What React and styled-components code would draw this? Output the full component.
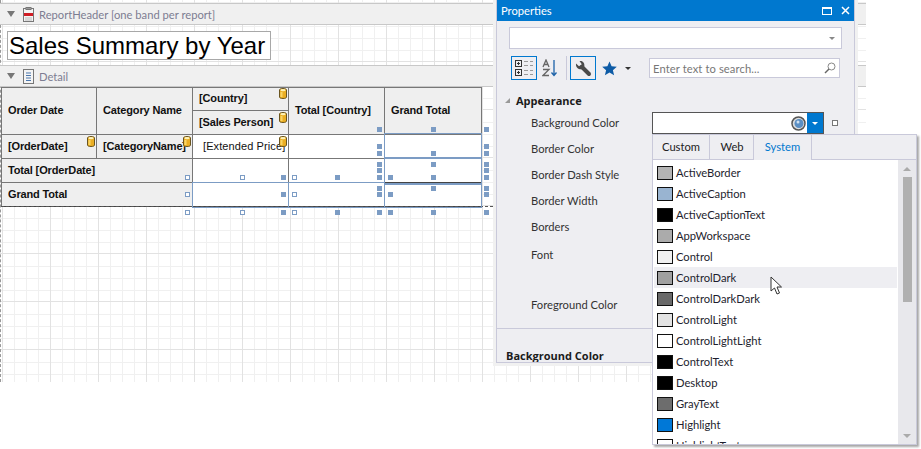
import React from "react";
import styled, { createGlobalStyle } from "styled-components";

const Global = createGlobalStyle`
  html, body { margin: 0; padding: 0; background: #fff; }
  * { box-sizing: border-box; }
`;

const UI = `Lato, "Open Sans", sans-serif`;
const BOLD = `"Open Sans", "Noto Sans", sans-serif`;
const CELL = `"Liberation Sans", Arial, sans-serif`;

const Page = styled.div`
  position: relative;
  width: 921px;
  height: 449px;
  overflow: hidden;
  background: #fff;
`;

const gridBg = `
  linear-gradient(to right, #e2e2e2 1px, transparent 1px) 1px 0 / 48px 100%,
  linear-gradient(to bottom, #e2e2e2 1px, transparent 1px) 0 13px / 100% 48px,
  linear-gradient(to right, #f0f0f0 1px, transparent 1px) 1px 0 / 12px 100%,
  linear-gradient(to bottom, #f0f0f0 1px, transparent 1px) 0 26px / 100% 48px,
  linear-gradient(to bottom, #f0f0f0 1px, transparent 1px) 0 38px / 100% 48px,
  linear-gradient(to bottom, #f0f0f0 1px, transparent 1px) 0 2px / 100% 48px,
  #fff
`;

const Canvas = styled.div`
  width: 866px;
  height: 382px;
  padding-top: 3px;
  background: ${gridBg};
  border-left: 1px dashed #999;
  display: flex;
  flex-direction: column;
`;

const BandCaption = styled.div`
  height: ${(p) => p.$h}px;
  flex: none;
  margin-left: -1px;
  display: flex;
  align-items: center;
  padding-left: 7px;
  background: #f0f0f0;
  border-top: 1px solid #c8c8c8;
  border-bottom: 1px solid #c8c8c8;
  font: 11.2px ${UI};
  color: #7d7d92;
`;

const Collapse = styled.span`
  width: 0;
  height: 0;
  margin-right: 8px;
  border-left: 4px solid transparent;
  border-right: 4px solid transparent;
  border-top: 6px solid #777;
`;

const BandIcon = styled.span`
  display: flex;
  margin-right: 5px;
`;

const BandBody = styled.div`
  height: 40px;
  flex: none;
  padding: 6px 0 0 6px;
`;

const TitleBox = styled.div`
  width: 264px;
  height: 29px;
  border: 1px solid #a8a8a8;
  background: #fff;
  font: 24px/27px "Liberation Sans", Arial, sans-serif;
  color: #000;
  padding-left: 1px;
  white-space: nowrap;
  overflow: hidden;
`;

const Table = styled.div`
  width: 481px;
  display: grid;
  grid-template-columns: 95px 96px 96px 96px 97px;
  grid-template-rows: 47px 24px 24px 24px;
  border-top: 1px solid #777;
  border-left: 1px solid #777;
  flex: none;
`;

const Cell = styled.div`
  position: relative;
  grid-column: span ${(p) => p.$span || 1};
  display: flex;
  align-items: center;
  padding-left: ${(p) => (p.$center ? 10 : 6)}px;
  padding-bottom: ${(p) => (p.$lift ? 3 : 1)}px;
  background: ${(p) => (p.$label ? "#efefef" : "#fff")};
  border-right: 1px solid ${(p) => (p.$strong ? "#555" : "#777")};
  border-bottom: 1px solid ${(p) => (p.$strong ? "#444" : "#777")};
  font: ${(p) => (p.$plain ? 400 : 700)} 11px ${CELL};
  letter-spacing: ${(p) => (p.$plain ? "0.1px" : "-0.15px")};
  color: #111;
  white-space: nowrap;
`;

const SplitCell = styled.div`
  display: grid;
  grid-template-rows: 23px 24px;
`;

const DbWrap = styled.span`
  position: absolute;
  right: ${(p) => p.$r}px;
  top: ${(p) => p.$t}px;
  display: flex;
`;

const DataIcon = ({ r = 1, t = 1 }) => (
  <DbWrap $r={r} $t={t}>
    <svg width="8" height="11" viewBox="0 0 8 11">
      <path d="M.5 2C.5 1 2 .5 4 .5S7.5 1 7.5 2v7c0 1-1.500 1.500-3.500 1.500S.5 10 .5 9z" fill="#eaae24" stroke="#6a5520" />
      <ellipse cx="4" cy="2.200" rx="2.600" ry="1.100" fill="#fdf2b8" />
      <rect x="1.500" y="4" width="2" height="5" fill="#f9d566" />
    </svg>
  </DbWrap>
);

const Handle = styled.span.attrs((p) => ({
  style: { left: p.$x - 2, top: p.$y - 2 },
}))`
  position: absolute;
  width: 5px;
  height: 5px;
  background: ${(p) => (p.$hollow ? "#fff" : "#7c9cc4")};
  border: 1px solid #7c9cc4;
`;

const Sel = styled.div.attrs((p) => ({
  style: { left: p.$x, top: p.$y, width: p.$w, height: p.$h },
}))`
  position: absolute;
  border: 1px solid #7c9cc4;
  pointer-events: none;
`;

const DashLine = styled.div`
  position: absolute;
  left: 1px;
  top: 206px;
  width: 492px;
  border-top: 1px dashed #555;
`;

const Panel = styled.div`
  position: absolute;
  left: 496px;
  top: 0;
  width: 359px;
  height: 363px;
  background: #eeeef2;
  border: 1px solid #c9c9da;
  border-top: 0;
  box-shadow: 0 0 0 3px #f1f1f1;
  display: flex;
  flex-direction: column;
  font: 11.2px ${UI};
  color: #333;
  overflow: hidden;
`;

const TitleBar = styled.div`
  height: 21px;
  flex: none;
  margin: 0 -1px;
  background: #0078cf;
  color: #fff;
  display: flex;
  align-items: center;
  padding: 0 5px;
  font: 11.2px ${UI};
`;

const TitleText = styled.span`
  flex: 1;
`;

const WinBtns = styled.span`
  display: flex;
  align-items: center;
  gap: 9px;
`;

const Combo = styled.div`
  height: 22px;
  margin: 6px 12px 0 12px;
  flex: none;
  background: #fff;
  border: 1px solid #c9c9da;
  display: flex;
  justify-content: flex-end;
  align-items: center;
  padding-right: 6px;
`;

const ArrowDown = styled.span`
  width: 0;
  height: 0;
  border-left: ${(p) => p.$s}px solid transparent;
  border-right: ${(p) => p.$s}px solid transparent;
  border-top: ${(p) => p.$s}px solid ${(p) => p.$c};
`;

const Toolbar = styled.div`
  display: flex;
  align-items: center;
  height: 24px;
  margin: 7px 0 0 14px;
  flex: none;
`;

const ToolBtn = styled.span`
  width: ${(p) => p.$w}px;
  height: 24px;
  margin-left: ${(p) => p.$ml || 0}px;
  display: flex;
  align-items: center;
  justify-content: center;
  border: 1px solid ${(p) => (p.$active ? "#0078cf" : "transparent")};
  flex: none;
`;

const Divider = styled.span`
  width: 1px;
  height: 24px;
  margin-left: ${(p) => p.$ml}px;
  background: #c9c9da;
  flex: none;
`;

const Search = styled.div`
  width: 191px;
  height: 20px;
  margin-left: 14px;
  background: #fff;
  border: 1px solid #c9c9da;
  display: flex;
  align-items: center;
  justify-content: space-between;
  padding: 0 3px;
  color: #777;
  font: 11.2px ${UI};
  letter-spacing: 0.1px;
  flex: none;
`;

const Section = styled.div`
  display: flex;
  align-items: center;
  height: 18px;
  margin-top: 12px;
  padding: 0 0 1px 8px;
  font: 700 11px ${BOLD};
  color: #1b1b1b;
  gap: 6px;
  flex: none;
`;

const Expanded = styled.span`
  width: 0;
  height: 0;
  border-bottom: 5px solid #999;
  border-left: 5px solid transparent;
`;

const PropRow = styled.div`
  height: ${(p) => p.$h}px;
  margin-top: ${(p) => p.$mt || 0}px;
  flex: none;
  display: flex;
  align-items: center;
  padding-left: 34px;
  color: #333;
`;

const PropLabel = styled.span`
  margin-bottom: 2px;
`;

const Editor = styled.div`
  width: 172px;
  height: 22px;
  margin-left: auto;
  margin-right: 30px;
  position: relative;
  background: #fff;
  border: 1px solid #555;
  display: flex;
  justify-content: flex-end;
  align-items: stretch;
  flex: none;
`;

const EyeSlot = styled.span`
  display: flex;
  align-items: center;
  margin-right: 1px;
`;

const DropBtn = styled.span`
  width: 16px;
  background: #0078cf;
  display: flex;
  align-items: center;
  justify-content: center;
`;

const Marker = styled.span`
  width: 6px;
  height: 6px;
  border: 1px solid #777;
  background: #fff;
  position: absolute;
  right: -15px;
  top: 7px;
`;

const Rule = styled.div`
  height: 1px;
  background: #c9c9da;
  flex: none;
`;

const CatTitle = styled.div`
  margin: 19px 0 0 9px;
  font: 700 11px ${BOLD};
  color: #1b1b1b;
  flex: none;
`;

const Popup = styled.div`
  position: absolute;
  left: 652px;
  top: 134px;
  width: 265px;
  height: 311px;
  background: #fff;
  border: 1px solid #c9c9da;
  box-shadow: 2px 2px 2px rgba(0, 0, 0, 0.35);
  display: flex;
  flex-direction: column;
  font: 11.2px ${UI};
`;

const Tabs = styled.div`
  height: 25px;
  flex: none;
  display: flex;
  background: #eeeef2;
  border-bottom: 1px solid #c9c9da;
`;

const Tab = styled.span`
  width: ${(p) => p.$w}px;
  height: ${(p) => (p.$active ? 25 : 24)}px;
  padding-bottom: 2px;
  display: flex;
  align-items: center;
  justify-content: center;
  border-right: 1px solid #c9c9da;
  margin-right: ${(p) => p.$gap || 0}px;
  color: ${(p) => (p.$active ? "#0078cf" : "#222")};
  background: #eeeef2;
`;

const ListWrap = styled.div`
  flex: 1;
  display: flex;
  min-height: 0;
`;

const List = styled.div`
  flex: 1;
  padding: 2px 1px 0 1px;
  overflow: hidden;
`;

const Item = styled.div`
  position: relative;
  height: 21px;
  display: flex;
  align-items: center;
  gap: 3px;
  padding-left: 3px;
  background: ${(p) => (p.$hover ? "#eeeef2" : "transparent")};
  color: #1e1e2e;
`;

const Swatch = styled.span`
  width: 16px;
  height: 14px;
  flex: none;
  background: ${(p) => p.$c};
  border: 1px solid #111;
`;

const Cursor = styled.span`
  position: absolute;
  left: 116px;
  top: 9px;
  display: flex;
`;

const Scroll = styled.div`
  width: 18px;
  flex: none;
  background: #e8e8ec;
  display: flex;
  flex-direction: column;
  align-items: center;
`;

const ScrollCap = styled.div`
  height: 17px;
  flex: none;
  display: flex;
  align-items: center;
  justify-content: center;
`;

const ArrowUp = styled.span`
  width: 0;
  height: 0;
  border-left: 4px solid transparent;
  border-right: 4px solid transparent;
  border-bottom: 4px solid #aaa;
`;

const Thumb = styled.div`
  width: 9px;
  height: 125px;
  background: #b0b0b0;
`;

const Spacer = styled.div`
  flex: 1;
`;

const handles = [
  [187, 177, 1], [242, 177, 1], [283, 177], [294, 177, 1],
  [187, 194, 1], [283, 194], [294, 194, 1],
  [187, 212, 1], [242, 212, 1], [283, 212], [294, 212, 1],
  [379, 129], [433, 129], [486, 129],
  [379, 146], [486, 146],
  [379, 153], [433, 153], [486, 153],
  [379, 164], [433, 164], [486, 164],
  [379, 170], [486, 170],
  [337, 177], [379, 177], [390, 177], [433, 177], [486, 177],
  [379, 188], [433, 188], [486, 188],
  [379, 194], [390, 194], [486, 194],
  [337, 212], [379, 212], [390, 212], [433, 212], [486, 212],
];

const selections = [
  [192, 182, 97, 26],
  [288, 182, 97, 26],
  [384, 133, 98, 26],
  [384, 157, 98, 28],
  [384, 183, 98, 25],
];

const colors = [
  ["ActiveBorder", "#b4b4b4"],
  ["ActiveCaption", "#99b4d1"],
  ["ActiveCaptionText", "#000"],
  ["AppWorkspace", "#ababab"],
  ["Control", "#f0f0f0"],
  ["ControlDark", "#a0a0a0"],
  ["ControlDarkDark", "#696969"],
  ["ControlLight", "#e3e3e3"],
  ["ControlLightLight", "#fff"],
  ["ControlText", "#000"],
  ["Desktop", "#000"],
  ["GrayText", "#6d6d6d"],
  ["Highlight", "#0078d7"],
  ["HighlightText", "#fff"],
];

const props = [
  ["Background Color", 26],
  ["Border Color", 26],
  ["Border Dash Style", 26],
  ["Border Width", 26],
  ["Borders", 26],
  ["Font", 30],
  ["Foreground Color", 46, 12],
];

const HeaderIcon = () => (
  <svg width="11" height="15" viewBox="0 0 11 15">
    <rect x=".5" y="1.500" width="10" height="13" fill="#f4f4f4" stroke="#777" />
    <rect x="3" y=".5" width="5" height="2" fill="#999" stroke="#777" />
    <rect x="1" y="6" width="9" height="3" fill="#d01c24" />
    <path d="M2 11h7M2 13h7" stroke="#bbb" />
  </svg>
);

const DetailIcon = () => (
  <svg width="11" height="15" viewBox="0 0 11 15">
    <rect x=".5" y=".5" width="10" height="14" fill="#f4f4f4" stroke="#777" />
    <path d="M3 4h5M3 6.500h5M3 9h5M3 11.500h5" stroke="#4a76ad" />
  </svg>
);

const CategorizedIcon = () => (
  <svg width="18" height="18" viewBox="0 0 18 18">
    <g fill="none" stroke="#333">
      <rect x=".5" y="1.500" width="6" height="6" />
      <rect x=".5" y="10.500" width="6" height="6" />
      <path d="M2 4.500h3M3.500 3v3M2 13.500h3M3.500 12v3" />
    </g>
    <path d="M9 2.500h4M15 2.500h3M9 6.500h4M15 6.500h3M9 11.500h4M15 11.500h3M9 15.500h4M15 15.500h3" stroke="#999" />
  </svg>
);

const SortIcon = () => (
  <svg width="16" height="18" viewBox="0 0 16 18">
    <path d="M1 8l3-7 3 7M2.200 5.500h3.600" fill="none" stroke="#666" strokeWidth="1.300" />
    <path d="M1 10.500h6L1 16.500h6" fill="none" stroke="#666" strokeWidth="1.300" />
    <path d="M12 1v15M9.500 13.500l2.500 3 2.500-3" fill="none" stroke="#1d62a8" strokeWidth="1.300" />
  </svg>
);

const WrenchIcon = () => (
  <svg width="17" height="17" viewBox="0 0 17 17">
    <path d="M7 7l7 7" stroke="#4a4a4a" strokeWidth="4" strokeLinecap="round" />
    <path d="M1 3.500 4 6.300 6.800 4.200 4.500 1C7.800.3 10 3 9.300 6.500L7 9.300C3.500 9.800.5 7.300 1 3.500z" fill="#4a4a4a" />
  </svg>
);

const StarIcon = () => (
  <svg width="15" height="15" viewBox="0 0 15 15">
    <path d="M7.500.5l2.100 4.800 5.200.5-3.900 3.400 1.200 5.100-4.600-2.700-4.600 2.700 1.200-5.100L.2 5.800l5.200-.5z" fill="#0d5ba6" />
  </svg>
);

const SearchIcon = () => (
  <svg width="12" height="12" viewBox="0 0 12 12">
    <circle cx="7.500" cy="4.500" r="3.500" fill="#fff" stroke="#888" />
    <path d="M5 7 1 11" stroke="#666" strokeWidth="1.500" />
  </svg>
);

const EyeIcon = () => (
  <svg width="15" height="15" viewBox="0 0 15 15">
    <circle cx="7.500" cy="7.500" r="6.500" fill="#ddd" stroke="#555" strokeWidth="1.500" />
    <circle cx="8" cy="7.500" r="4.500" fill="#5b8fc4" />
    <circle cx="7" cy="6" r="1.500" fill="#cfe0f0" />
  </svg>
);

const CursorIcon = () => (
  <svg width="13" height="20" viewBox="0 0 13 20">
    <path d="M1 1v14l3.500-3 2.500 6 2.500-1-2.500-6H11.500z" fill="#fff" stroke="#333" />
  </svg>
);

export default function App() {
  return (
    <Page>
      <Global />
      <Canvas>
        <BandCaption $h={22}>
          <Collapse />
          <BandIcon><HeaderIcon /></BandIcon>
          <span>ReportHeader [one band per report]</span>
        </BandCaption>
        <BandBody>
          <TitleBox>Sales Summary by Year</TitleBox>
        </BandBody>
        <BandCaption $h={22}>
          <Collapse />
          <BandIcon><DetailIcon /></BandIcon>
          <span>Detail</span>
        </BandCaption>
        <Table>
          <Cell $label $lift>Order Date</Cell>
          <Cell $label $lift>Category Name</Cell>
          <SplitCell>
            <Cell $label $lift>[Country]<DataIcon t={0} /></Cell>
            <Cell $label>[Sales Person]<DataIcon /></Cell>
          </SplitCell>
          <Cell $label $lift>Total [Country]</Cell>
          <Cell $label $lift>Grand Total</Cell>

          <Cell $label>[OrderDate]<DataIcon /></Cell>
          <Cell $label>[CategoryName]<DataIcon /></Cell>
          <Cell $plain $center>[Extended Price]<DataIcon /></Cell>
          <Cell />
          <Cell $strong />

          <Cell $label $span={2}>Total [OrderDate]</Cell>
          <Cell />
          <Cell />
          <Cell $strong />

          <Cell $label $span={2} $strong>Grand Total</Cell>
          <Cell $strong />
          <Cell $strong />
          <Cell $strong />
        </Table>
      </Canvas>

      <DashLine />
      {selections.map(([x, y, w, h]) => (
        <Sel key={`${x}-${y}`} $x={x} $y={y} $w={w} $h={h} />
      ))}
      {handles.map(([x, y, hollow]) => (
        <Handle key={`${x}-${y}`} $x={x} $y={y} $hollow={hollow} />
      ))}

      <Panel>
        <TitleBar>
          <TitleText>Properties</TitleText>
          <WinBtns>
            <svg width="10" height="8" viewBox="0 0 10 8">
              <rect x=".5" y=".5" width="9" height="7" fill="none" stroke="#fff" />
              <path d="M0 1.500h10" stroke="#fff" />
            </svg>
            <svg width="9" height="9" viewBox="0 0 9 9">
              <path d="M1 1l7 7M8 1 1 8" stroke="#fff" strokeWidth="1.500" />
            </svg>
          </WinBtns>
        </TitleBar>
        <Combo>
          <ArrowDown $s={3} $c="#888" />
        </Combo>
        <Toolbar>
          <ToolBtn $w={26} $active><CategorizedIcon /></ToolBtn>
          <ToolBtn $w={20} $ml={3}><SortIcon /></ToolBtn>
          <Divider $ml={6} />
          <ToolBtn $w={26} $ml={3} $active><WrenchIcon /></ToolBtn>
          <ToolBtn $w={20} $ml={3}><StarIcon /></ToolBtn>
          <ToolBtn $w={14} $ml={2}><ArrowDown $s={3} $c="#333" /></ToolBtn>
          <Search>
            <span>Enter text to search...</span>
            <SearchIcon />
          </Search>
        </Toolbar>
        <Section>
          <Expanded />
          Appearance
        </Section>
        {props.map(([label, h, mt], i) => (
          <PropRow key={label} $h={h} $mt={mt}>
            <PropLabel>{label}</PropLabel>
            {i === 0 && (
              <Editor>
                <EyeSlot><EyeIcon /></EyeSlot>
                <DropBtn><ArrowDown $s={3} $c="#fff" /></DropBtn>
                <Marker />
              </Editor>
            )}
          </PropRow>
        ))}
        <Rule />
        <CatTitle>Background Color</CatTitle>
      </Panel>

      <Popup>
        <Tabs>
          <Tab $w={57} $gap={1}>Custom</Tab>
          <Tab $w={43}>Web</Tab>
          <Tab $w={58} $active>System</Tab>
        </Tabs>
        <ListWrap>
          <List>
            {colors.map(([name, c]) => (
              <Item key={name} $hover={name === "ControlDark"}>
                <Swatch $c={c} />
                {name}
                {name === "ControlDark" && (
                  <Cursor><CursorIcon /></Cursor>
                )}
              </Item>
            ))}
          </List>
          <Scroll>
            <ScrollCap><ArrowUp /></ScrollCap>
            <Thumb />
            <Spacer />
            <ScrollCap><ArrowDown $s={4} $c="#aaa" /></ScrollCap>
          </Scroll>
        </ListWrap>
      </Popup>
    </Page>
  );
}
